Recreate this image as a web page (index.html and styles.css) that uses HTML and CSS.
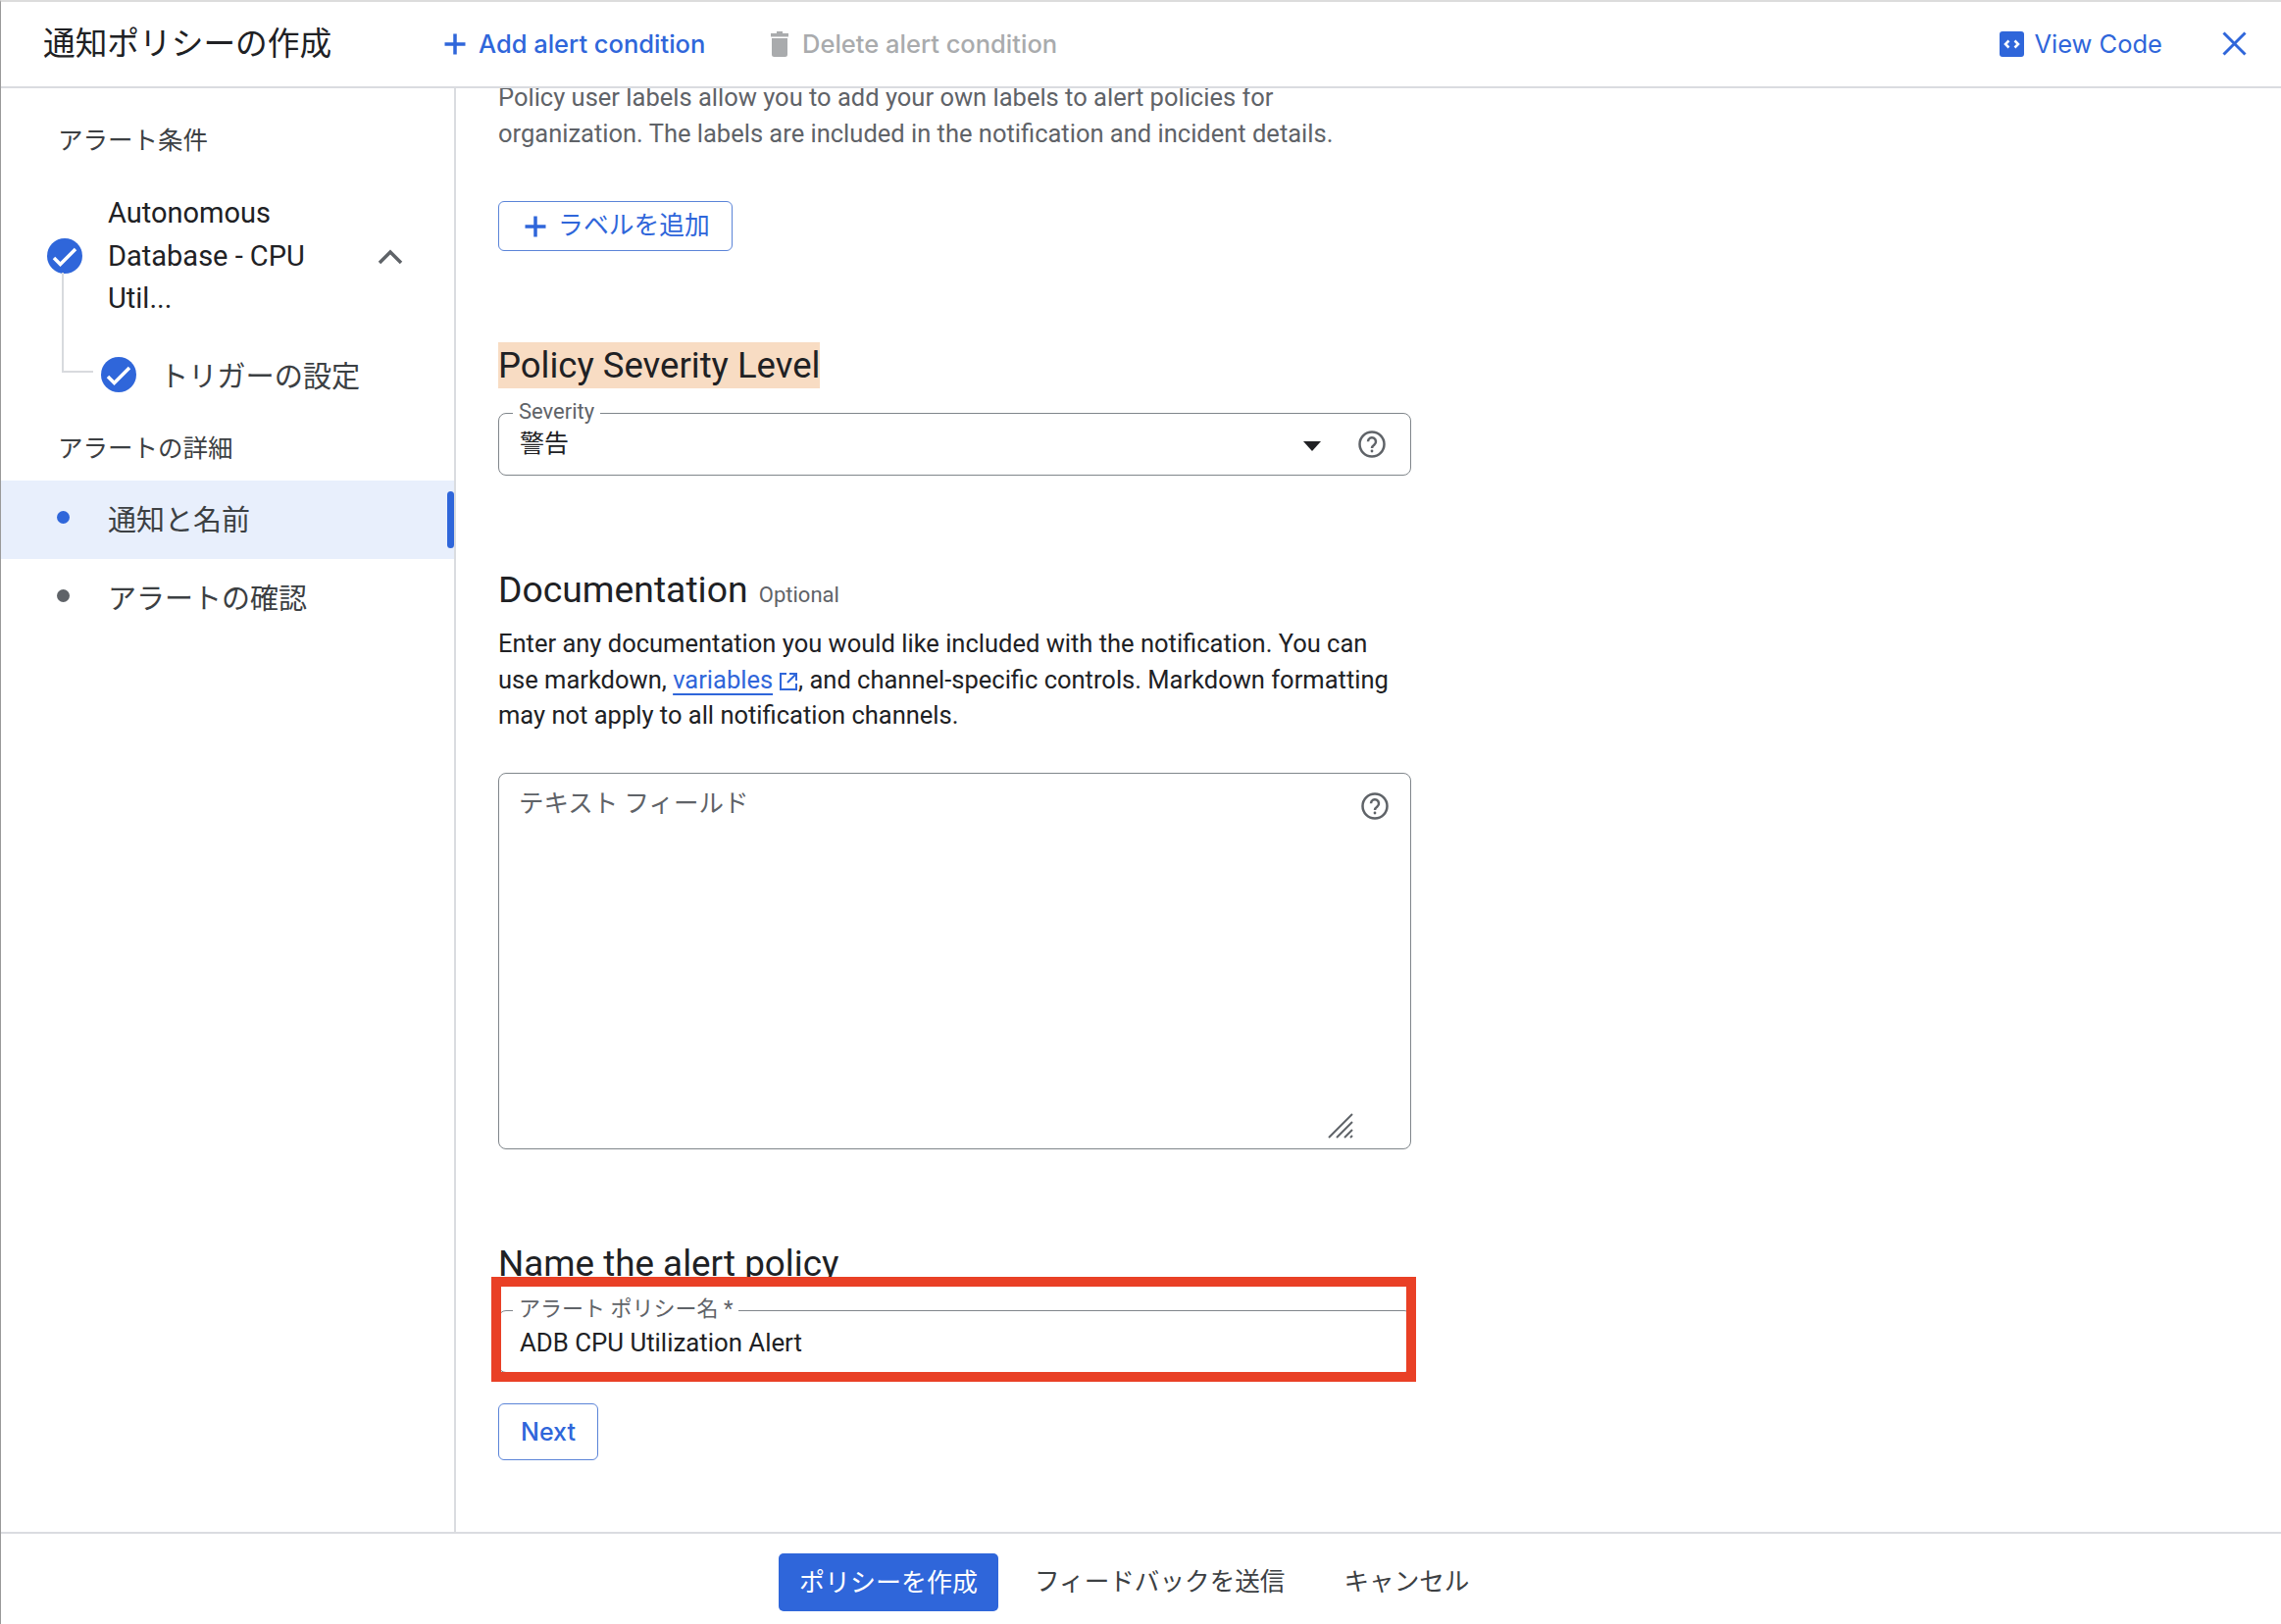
FILE: index.html
```html
<!DOCTYPE html>
<html lang="ja">
<head>
<meta charset="utf-8">
<title>通知ポリシーの作成</title>
<link rel="stylesheet" href="styles.css">
</head>
<body>
<div class="app">
  <header class="topbar">
    <h1 class="title">通知ポリシーの作成</h1>
    <button class="action action-add">
      <svg class="ic-plus" viewBox="0 0 24 24"><path d="M12 1.5v21M1.500 12h21"/></svg>
      Add alert condition
    </button>
    <button class="action action-del">
      <svg class="ic-trash" viewBox="0 0 20 26"><path d="M7 0h6v2h6v3.500H1V2h6zM2 7h16v16.500a2.500 2.500 0 0 1-2.500 2.500h-11A2.500 2.500 0 0 1 2 23.500z"/></svg>
      Delete alert condition
    </button>
    <button class="action action-code">
      <svg class="ic-code" viewBox="0 0 25 26"><rect width="25" height="26" rx="3"/><path d="M9.500 9.500 6 13l3.500 3.500M15.500 9.500 19 13l-3.500 3.500"/></svg>
      View Code
    </button>
    <button class="close" aria-label="Close">
      <svg viewBox="0 0 25 25"><path d="M1.500 1.500l22 22M23.500 1.500l-22 22"/></svg>
    </button>
  </header>

  <div class="middle">
    <nav class="side">
      <div class="side-head head-first">アラート条件</div>
      <div class="cond">
        <svg class="check" viewBox="0 0 36 36"><circle cx="18" cy="18" r="18"/><path d="M7 20l6.500 6.500L29 11"/></svg>
        <div class="cond-name">Autonomous<br>Database - CPU<br>Util...</div>
        <svg class="chev" viewBox="0 0 26 16"><path d="M2 14 13 3l11 11"/></svg>
      </div>
      <div class="sub">
        <span class="tree"></span>
        <svg class="check" viewBox="0 0 36 36"><circle cx="18" cy="18" r="18"/><path d="M7 20l6.500 6.500L29 11"/></svg>
        <span class="sub-text">トリガーの設定</span>
      </div>
      <div class="side-head head-second">アラートの詳細</div>
      <div class="step step-active"><span class="dot"></span>通知と名前</div>
      <div class="step"><span class="dot"></span>アラートの確認</div>
    </nav>

    <main class="main">
      <p class="para para-clipped">Policy user labels allow you to add your own labels to alert policies for organization. The labels are included in the notification and incident details.</p>
      <button class="outline-btn add-label">
        <svg class="ic-plus" viewBox="0 0 24 24"><path d="M12 1.500v21M1.500 12h21"/></svg>
        <span class="btn-cjk">ラベルを追加</span>
      </button>

      <h2 class="heading heading-mark"><span class="mark">Policy Severity Level</span></h2>
      <div class="field field-select">
        <span class="float-label">Severity</span>
        <span class="value">警告</span>
        <span class="arrow"></span>
        <svg class="help" viewBox="0 0 28 28"><circle cx="14" cy="14" r="12.500"/><path d="M10 11.200a4 4 0 1 1 6.400 3.200c-1.500 1.100-2.400 1.800-2.400 3.600"/><circle class="help-dot" cx="14" cy="21" r="1.400"/></svg>
      </div>

      <h2 class="heading heading-doc">Documentation <span class="optional">Optional</span></h2>
      <p class="para para-doc">Enter any documentation you would like included with the notification. You can use markdown, <a class="link" href="#">variables</a><svg class="ic-ext" viewBox="0 0 20 20"><path d="M8 2H2v16h16v-6M11 2h7v7M18 2 9 11"/></svg>, and channel-specific controls. Markdown formatting may not apply to all notification channels.</p>
      <div class="field field-area">
        <span class="placeholder">テキスト フィールド</span>
        <svg class="help" viewBox="0 0 28 28"><circle cx="14" cy="14" r="12.500"/><path d="M10 11.200a4 4 0 1 1 6.400 3.200c-1.500 1.100-2.400 1.800-2.400 3.600"/><circle class="help-dot" cx="14" cy="21" r="1.400"/></svg>
        <svg class="resize" viewBox="0 0 26 26"><path d="M1 25 25 1M9 25 25 9M17 25l8-8M23 25l2-2"/></svg>
      </div>

      <h2 class="heading heading-name">Name the alert policy</h2>
      <div class="name-wrap">
        <div class="field field-name">
          <span class="float-label">アラート ポリシー名 *</span>
          <span class="value">ADB CPU Utilization Alert</span>
        </div>
        <div class="callout"></div>
      </div>
      <button class="outline-btn next">Next</button>
    </main>
  </div>

  <footer class="footer">
    <button class="primary">ポリシーを作成</button>
    <button class="text-btn">フィードバックを送信</button>
    <button class="text-btn">キャンセル</button>
  </footer>
</div>
</body>
</html>
```

FILE: styles.css
```css
* { box-sizing: border-box; }
html, body { margin: 0; height: 100%; background: #fff; }
body { font-family: "Roboto", "Noto Sans CJK JP", sans-serif; color: #202124; overflow: hidden; }
button { font: inherit; background: none; border: 0; padding: 0; cursor: pointer; }

.app { height: 1656px; display: flex; flex-direction: column; border-left: 1px solid #9a9a9a; border-top: 2px solid #dcdcdc; }

.topbar { height: 88px; flex: none; display: flex; align-items: center; border-bottom: 2px solid #dadce0; padding: 0 0 1px 43px; }
.title { margin: 0 0 7px; font-size: 32.700px; font-weight: 400; width: 408px; white-space: nowrap; }
.action { display: flex; align-items: center; font-family: "Inter", "Roboto", sans-serif; font-size: 25.500px; font-weight: 500; color: #2f66da; white-space: nowrap; }
.action-add { gap: 12px; width: 333px; }
.action-del { gap: 13px; color: #a9abad; }
.action-code { gap: 10px; margin-left: auto; font-weight: 400; }
.close { margin-left: 61px; margin-right: 35px; width: 25px; height: 25px; }
.close svg { display: block; width: 25px; height: 25px; fill: none; stroke: #2f66da; stroke-width: 3; }
.ic-plus { width: 24px; height: 24px; fill: none; stroke: #2f66da; stroke-width: 3.500; flex: none; }
.ic-trash { width: 20px; height: 26px; fill: #a9abad; flex: none; }
.ic-code { width: 25px; height: 26px; flex: none; }
.ic-code rect { fill: #2f66da; }
.ic-code path { fill: none; stroke: #fff; stroke-width: 2.500; }

.middle { flex: 1; min-height: 0; display: flex; }

.side { width: 464px; flex: none; border-right: 2px solid #dadce0; }
.side-head { font-size: 25.500px; line-height: 36px; padding-left: 58px; color: #3c4043; }
.head-first { margin-top: 35px; }
.head-second { margin-top: 35px; }
.cond { display: flex; align-items: center; padding-left: 47px; margin-top: 35px; }
.check { width: 36px; height: 36px; flex: none; }
.check circle { fill: #2f66da; }
.check path { fill: none; stroke: #fff; stroke-width: 3.500; }
.cond-name { font-size: 29px; line-height: 43.500px; margin-left: 26px; width: 275px; }
.chev { width: 26px; height: 16px; fill: none; stroke: #5f6368; stroke-width: 3.500; margin-top: 2px; }
.sub { position: relative; display: flex; align-items: center; padding-left: 102px; margin-top: 33px; height: 44px; }
.tree { position: absolute; left: 62px; top: -82px; width: 32px; height: 102px; border-left: 2px solid #d8dade; border-bottom: 2px solid #d8dade; }
.sub-text { font-size: 29.200px; color: #3c4043; margin-left: 24px; margin-bottom: 2px; }
.step { position: relative; display: flex; align-items: center; height: 80px; font-size: 29px; padding: 0 0 4px 57px; color: #3c4043; }
.head-second + .step { margin-top: 15px; }
.step-active { background: #e8effc; }
.step-active::after { content: ""; position: absolute; right: 0; top: 11px; width: 7px; height: 58px; background: #2f66da; border-radius: 4px; }
.dot { width: 13px; height: 13px; border-radius: 50%; background: #5f6368; margin-right: 39px; flex: none; }
.step-active .dot { background: #2f66da; }

.main { flex: 1; min-width: 0; overflow: hidden; padding-left: 43px; }
.main > * { width: 932px; }
.main > .field { width: 931px; }
.para { margin: 0; font-size: 25.500px; line-height: 36.500px; }
.para-clipped { margin-top: -9px; width: 880px; color: #5f6368; }
.outline-btn { display: flex; align-items: center; justify-content: center; border: 1.500px solid #5b84d8; border-radius: 6px; color: #2f66da; background: #fff; }
.main > .add-label { width: 239px; height: 51px; margin-top: 51px; gap: 11px; padding-left: 3px; font-size: 25.800px; }
.btn-cjk { margin-bottom: 6px; }
.main > .next { width: 102px; height: 58px; margin-top: 31px; font-family: "Inter", "Roboto", sans-serif; font-size: 25px; font-weight: 500; }

.heading { margin: 0; font-family: "Roboto", "Noto Sans CJK JP", sans-serif; font-size: 36.800px; font-weight: 400; line-height: 47px; white-space: nowrap; }
.heading-mark { margin-top: 93px; font-size: 36.500px; }
.heading-doc { margin-top: 93px; font-size: 37.300px; }
.heading-name { margin-top: 93px; }
.mark { display: inline-block; background: #f8dcc3; }
.optional { font-size: 22px; color: #5f6368; margin-left: 2px; }
.para-doc { margin-top: 8px; }
.link { color: #2f66da; text-decoration: underline; text-underline-offset: 5px; }
.ic-ext { width: 20px; height: 20px; margin-left: 6px; vertical-align: -3px; fill: none; stroke: #2f66da; stroke-width: 2; }

.field { position: relative; border: 1.500px solid #80868b; border-radius: 8px; background: #fff; }
.field-select { height: 64px; margin-top: 25px; display: flex; align-items: center; padding: 0 0 6px 21px; font-size: 25px; }
.field-area { height: 384px; margin-top: 40px; padding: 13px 0 0 20px; }
.field-name { height: 64px; padding: 17px 0 0 21px; font-size: 25.800px; }
.float-label { position: absolute; left: 14px; top: -14px; padding: 0 6px; background: #fff; font-size: 22px; line-height: 24px; color: #5f6368; white-space: nowrap; }
.arrow { position: absolute; right: 91px; top: 28px; border-left: 9px solid transparent; border-right: 9px solid transparent; border-top: 10px solid #202124; }
.help { position: absolute; width: 28px; height: 28px; fill: none; stroke: #5f6368; stroke-width: 2.500; }
.help-dot { fill: #5f6368; stroke: none; }
.field-select .help { right: 25px; top: 17px; }
.field-area .help { right: 22px; top: 19px; }
.placeholder { font-size: 25.500px; line-height: 34px; color: #5f6368; }
.resize { position: absolute; right: 58px; bottom: 10px; width: 26px; height: 26px; fill: none; stroke: #5f6368; stroke-width: 2; }
.name-wrap { position: relative; margin-top: 24px; }
.callout { position: absolute; left: -7px; right: -4px; top: -34px; bottom: -9px; border: 10px solid #e94026; }

.footer { height: 94px; flex: none; border-top: 2px solid #dadce0; display: flex; align-items: center; padding-left: 793px; }
.primary { width: 224px; height: 59px; padding-bottom: 3px; background: #2f66da; color: #fff; border-radius: 5px; font-size: 26px; margin-top: 6px; }
.text-btn { font-size: 25.600px; color: #3c4043; margin-left: 37px; }
.text-btn:last-child { margin-left: 60px; }
```
